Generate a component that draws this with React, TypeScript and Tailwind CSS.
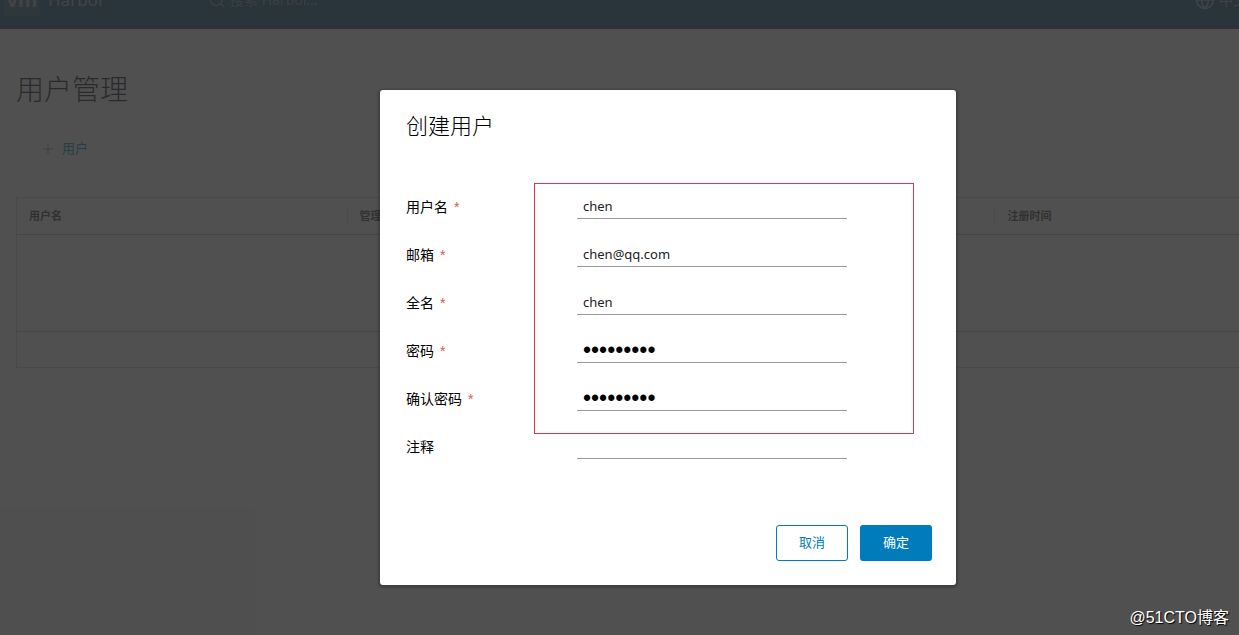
import { useState } from 'react'
import { Globe, Plus, Search } from 'lucide-react'

interface Field {
  id: string
  label: string
  type: 'text' | 'email' | 'password'
  required: boolean
  value: string
}

const FIELDS: Field[] = [
  { id: 'username', label: '用户名', type: 'text', required: true, value: 'chen' },
  { id: 'email', label: '邮箱', type: 'email', required: true, value: 'chen@qq.com' },
  { id: 'realname', label: '全名', type: 'text', required: true, value: 'chen' },
  { id: 'password', label: '密码', type: 'password', required: true, value: 'Harbor123' },
  { id: 'confirm', label: '确认密码', type: 'password', required: true, value: 'Harbor123' },
  { id: 'comment', label: '注释', type: 'text', required: false, value: '' },
]

function Header() {
  return (
    <header className="h-[29px] overflow-hidden border-b-3 border-[#333] bg-[#004a70] text-[#a4b4be]">
      <div className="-mt-8 flex h-16 items-center">
        <div className="ml-1 flex h-8 w-9 items-center justify-center bg-[#1f5a78] text-xl font-bold">
          vm
        </div>
        <span className="ml-2 w-40 text-[17px]">Harbor</span>
        <Search aria-hidden="true" className="h-[18px] w-[18px] text-[#6f8fa3]" />
        <input
          type="search"
          aria-label="搜索"
          placeholder="搜索 Harbor..."
          className="ml-1 min-w-0 flex-1 bg-transparent text-sm placeholder:text-[#6f8fa3]"
        />
        <button
          type="button"
          className="-mr-2 flex items-center gap-1 text-sm whitespace-nowrap text-[#8fa6b4]"
        >
          <Globe aria-hidden="true" className="h-5 w-5" />
          中文
        </button>
      </div>
    </header>
  )
}

function UserTable() {
  return (
    <table className="mt-9 w-full table-fixed border-y border-l border-[#ccc] text-left text-[11px] text-[#313131]">
      <thead>
        <tr className="h-[37px] border-b border-[#bbb]">
          <th className="w-[27%] px-3 font-semibold">用户名</th>
          <th className="w-[53%] font-semibold">
            <div className="border-l border-[#ddd] px-3">管理员</div>
          </th>
          <th className="font-semibold">
            <div className="border-l border-[#ddd] px-3">注册时间</div>
          </th>
        </tr>
      </thead>
      <tbody>
        <tr className="h-[97px] border-b border-[#bbb]">
          <td colSpan={3} />
        </tr>
      </tbody>
      <tfoot>
        <tr className="h-9">
          <td colSpan={3} />
        </tr>
      </tfoot>
    </table>
  )
}

function CreateUserDialog() {
  const [values, setValues] = useState<Record<string, string>>(() =>
    Object.fromEntries(FIELDS.map((field) => [field.id, field.value])),
  )

  return (
    <form
      role="dialog"
      aria-labelledby="dialog-title"
      className="relative w-full max-w-xl rounded-[3px] bg-white px-6 pt-5 pb-6 text-black shadow-[0_1px_2px_2px_rgba(0,0,0,0.2)]"
      onSubmit={(e) => e.preventDefault()}
    >
      <h2 id="dialog-title" className="pl-0.5 text-[22px] leading-[30px] font-light">
        创建用户
      </h2>

      <div className="mt-[49px] space-y-3 pl-0.5">
        {FIELDS.map((field) => (
          <div key={field.id} className="flex h-9 items-center">
            <label htmlFor={field.id} className="w-[171px] text-sm">
              {field.label}
              {field.required && (
                <span className="ml-1.5 font-['Liberation_Sans',sans-serif] text-[#d0604c]">*</span>
              )}
            </label>
            <input
              id={field.id}
              type={field.type}
              value={values[field.id]}
              autoComplete="off"
              onChange={(e) => setValues({ ...values, [field.id]: e.target.value })}
              className={`h-6 w-[270px] border-b border-[#9a9a9a] px-1.5 outline-none ${
                field.type === 'password'
                  ? "font-['Liberation_Sans',sans-serif] text-[23px]"
                  : 'pb-0.5 text-[13px] text-[#222]'
              }`}
            />
          </div>
        ))}
      </div>

      <div
        aria-hidden="true"
        className="pointer-events-none absolute top-[93px] left-[154px] h-[251px] w-[380px] border border-[#d93a4a]"
      />

      <div className="mt-15 flex justify-end gap-3 text-[13px]">
        <button type="button" className="h-9 w-18 rounded-[3px] border border-[#007cbb] text-[#007cbb]">
          取消
        </button>
        <button type="submit" className="h-9 w-18 rounded-[3px] bg-[#007cbb] text-white">
          确定
        </button>
      </div>
    </form>
  )
}

export default function App() {
  return (
    <div className="relative min-h-screen overflow-hidden bg-[#fafafa] font-['Noto_Sans','Noto_Sans_CJK_SC',sans-serif]">
      <Header />
      <main className="pt-10 pl-4">
        <h1 className="text-[28px] leading-10 font-light text-black">用户管理</h1>
        <button type="button" className="mt-7 ml-6 flex h-6 items-center gap-1.5 text-[13px] text-[#007cbb]">
          <Plus aria-hidden="true" className="h-4 w-4" strokeWidth={1} />
          用户
        </button>
        <UserTable />
      </main>

      <div className="absolute inset-0 flex items-start justify-center bg-[#313131]/85 pt-[90px] pl-[97px]">
        <CreateUserDialog />
      </div>

      <div className="absolute right-2.5 bottom-[5px] font-['Liberation_Sans','Noto_Sans_CJK_SC',sans-serif] text-base text-white [text-shadow:1px_1px_1px_#000]">
        @51CTO博客
      </div>
    </div>
  )
}
